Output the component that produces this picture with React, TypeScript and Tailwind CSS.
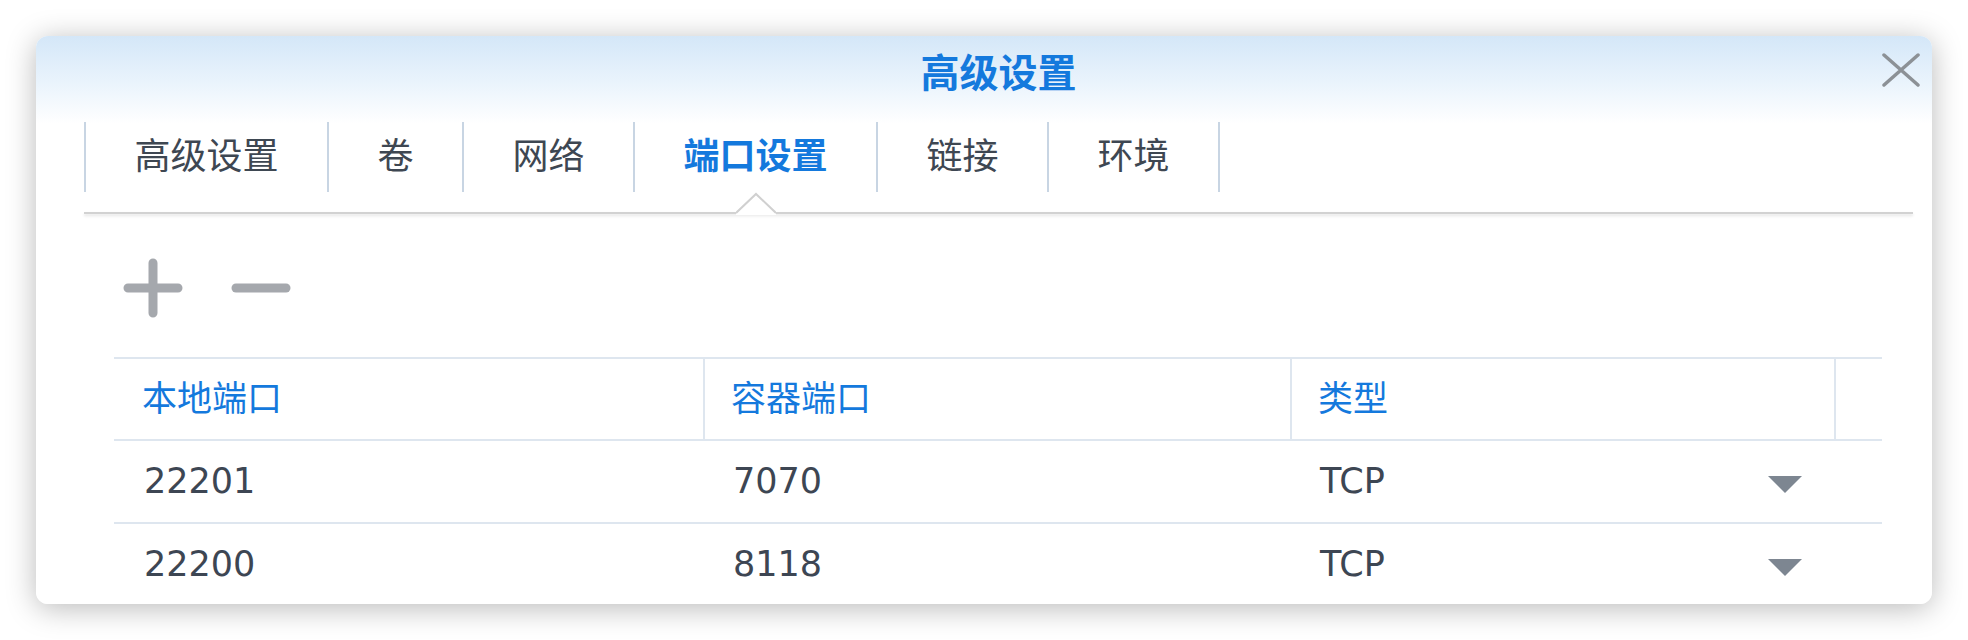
import React from "react";

const tabs = ["高级设置", "卷", "网络", "端口设置", "链接", "环境"];
const activeTab = 3;

const rows = [
  { local: "22201", container: "7070", type: "TCP" },
  { local: "22200", container: "8118", type: "TCP" },
];

const CloseIcon = () => (
  <svg width="38" height="34" viewBox="0 0 38 34">
    <path d="M2 2 L36 32 M36 2 L2 32" stroke="#8c9196" strokeWidth="3.5" strokeLinecap="round" />
  </svg>
);

const PlusIcon = () => (
  <svg width="60" height="60" viewBox="0 0 60 60">
    <path d="M5 30 H55 M30 5 V55" stroke="#a5a8ad" strokeWidth="9" strokeLinecap="round" />
  </svg>
);

const MinusIcon = () => (
  <svg width="60" height="10" viewBox="0 0 60 10">
    <path d="M5 5 H55" stroke="#a5a8ad" strokeWidth="9" strokeLinecap="round" />
  </svg>
);

const Caret = () => (
  <svg width="34" height="17" viewBox="0 0 34 17">
    <polygon points="0,0 34,0 17,17" fill="#7d8691" />
  </svg>
);

const Notch = () => (
  <svg width="40" height="23" viewBox="0 0 40 23" className="absolute left-1/2 top-full z-10 -translate-x-1/2">
    <polygon points="0,23 0,20 20,1 40,20 40,23" fill="#ffffff" />
    <polyline points="0,21 20,2 40,21" fill="none" stroke="#d0d0d0" strokeWidth="2" />
  </svg>
);

const App = () => {
  return (
    <div className="min-h-[640px] w-full bg-white pt-[36px] pl-[36px] font-['DejaVu_Sans','Noto_Sans_CJK_SC',sans-serif]">
      <div className="relative h-[568px] w-[1896px] overflow-hidden rounded-[12px] bg-[linear-gradient(180deg,#d4e7f8_0px,#e9f3fc_45px,#ffffff_88px)] shadow-[0_4px_30px_rgba(0,0,0,0.28)]">
        {/* title */}
        <div className="flex h-[86px] justify-center pt-[18px] pl-[29px]">
          <span className="text-[39px] font-bold leading-[39px] text-[#1479dd]">高级设置</span>
        </div>
        <div className="absolute right-[12px] top-[17px]">
          <CloseIcon />
        </div>

        {/* tabs */}
        <div className="ml-[48px] flex h-[70px] border-l-2 border-[#c8d5e3]">
          {tabs.map((t, i) => (
            <div
              key={t}
              className={
                i === activeTab
                  ? "relative flex items-center border-r-2 border-[#c8d5e3] px-[48.5px] text-[36px] font-bold leading-none text-[#1479dd]"
                  : "relative flex items-center border-r-2 border-[#c8d5e3] px-[48.5px] text-[36px] leading-none text-[#3e4752]"
              }
            >
              {t}
              {i === activeTab && <Notch />}
            </div>
          ))}
        </div>
        <div className="ml-[48px] mr-[19px] mt-[20px] h-[2px] bg-[#d2d2d2] shadow-[0_2px_3px_rgba(0,0,0,0.12)]"></div>

        {/* toolbar */}
        <div className="ml-[87px] mt-[44px] flex items-center gap-[48px]">
          <PlusIcon />
          <MinusIcon />
        </div>

        {/* table */}
        <div className="ml-[78px] mt-[39px] w-[1768px] border-t-2 border-[#dee6ef]">
          <div className="grid h-[82px] grid-cols-[591px_587px_544px_46px] border-b-2 border-[#dee6ef] text-[35px] leading-none text-[#1479dd]">
            <div className="flex items-center border-r-2 border-[#dee6ef] pl-[28px]">本地端口</div>
            <div className="flex items-center border-r-2 border-[#dee6ef] pl-[26px]">容器端口</div>
            <div className="flex items-center border-r-2 border-[#dee6ef] pl-[26px]">类型</div>
            <div></div>
          </div>
          {rows.map((r) => (
            <div
              key={r.local}
              className="grid h-[83px] grid-cols-[591px_587px_544px_46px] border-b-2 border-[#dee6ef] text-[35px] leading-none text-[#3d4653]"
            >
              <div className="flex items-center pl-[30px]">{r.local}</div>
              <div className="flex items-center pl-[28px]">{r.container}</div>
              <div className="flex items-center justify-between pl-[28px] pr-[34px]">
                <span>{r.type}</span>
                <span className="mt-[6px]">
                  <Caret />
                </span>
              </div>
              <div></div>
            </div>
          ))}
        </div>
      </div>
    </div>
  );
};

export default App;
